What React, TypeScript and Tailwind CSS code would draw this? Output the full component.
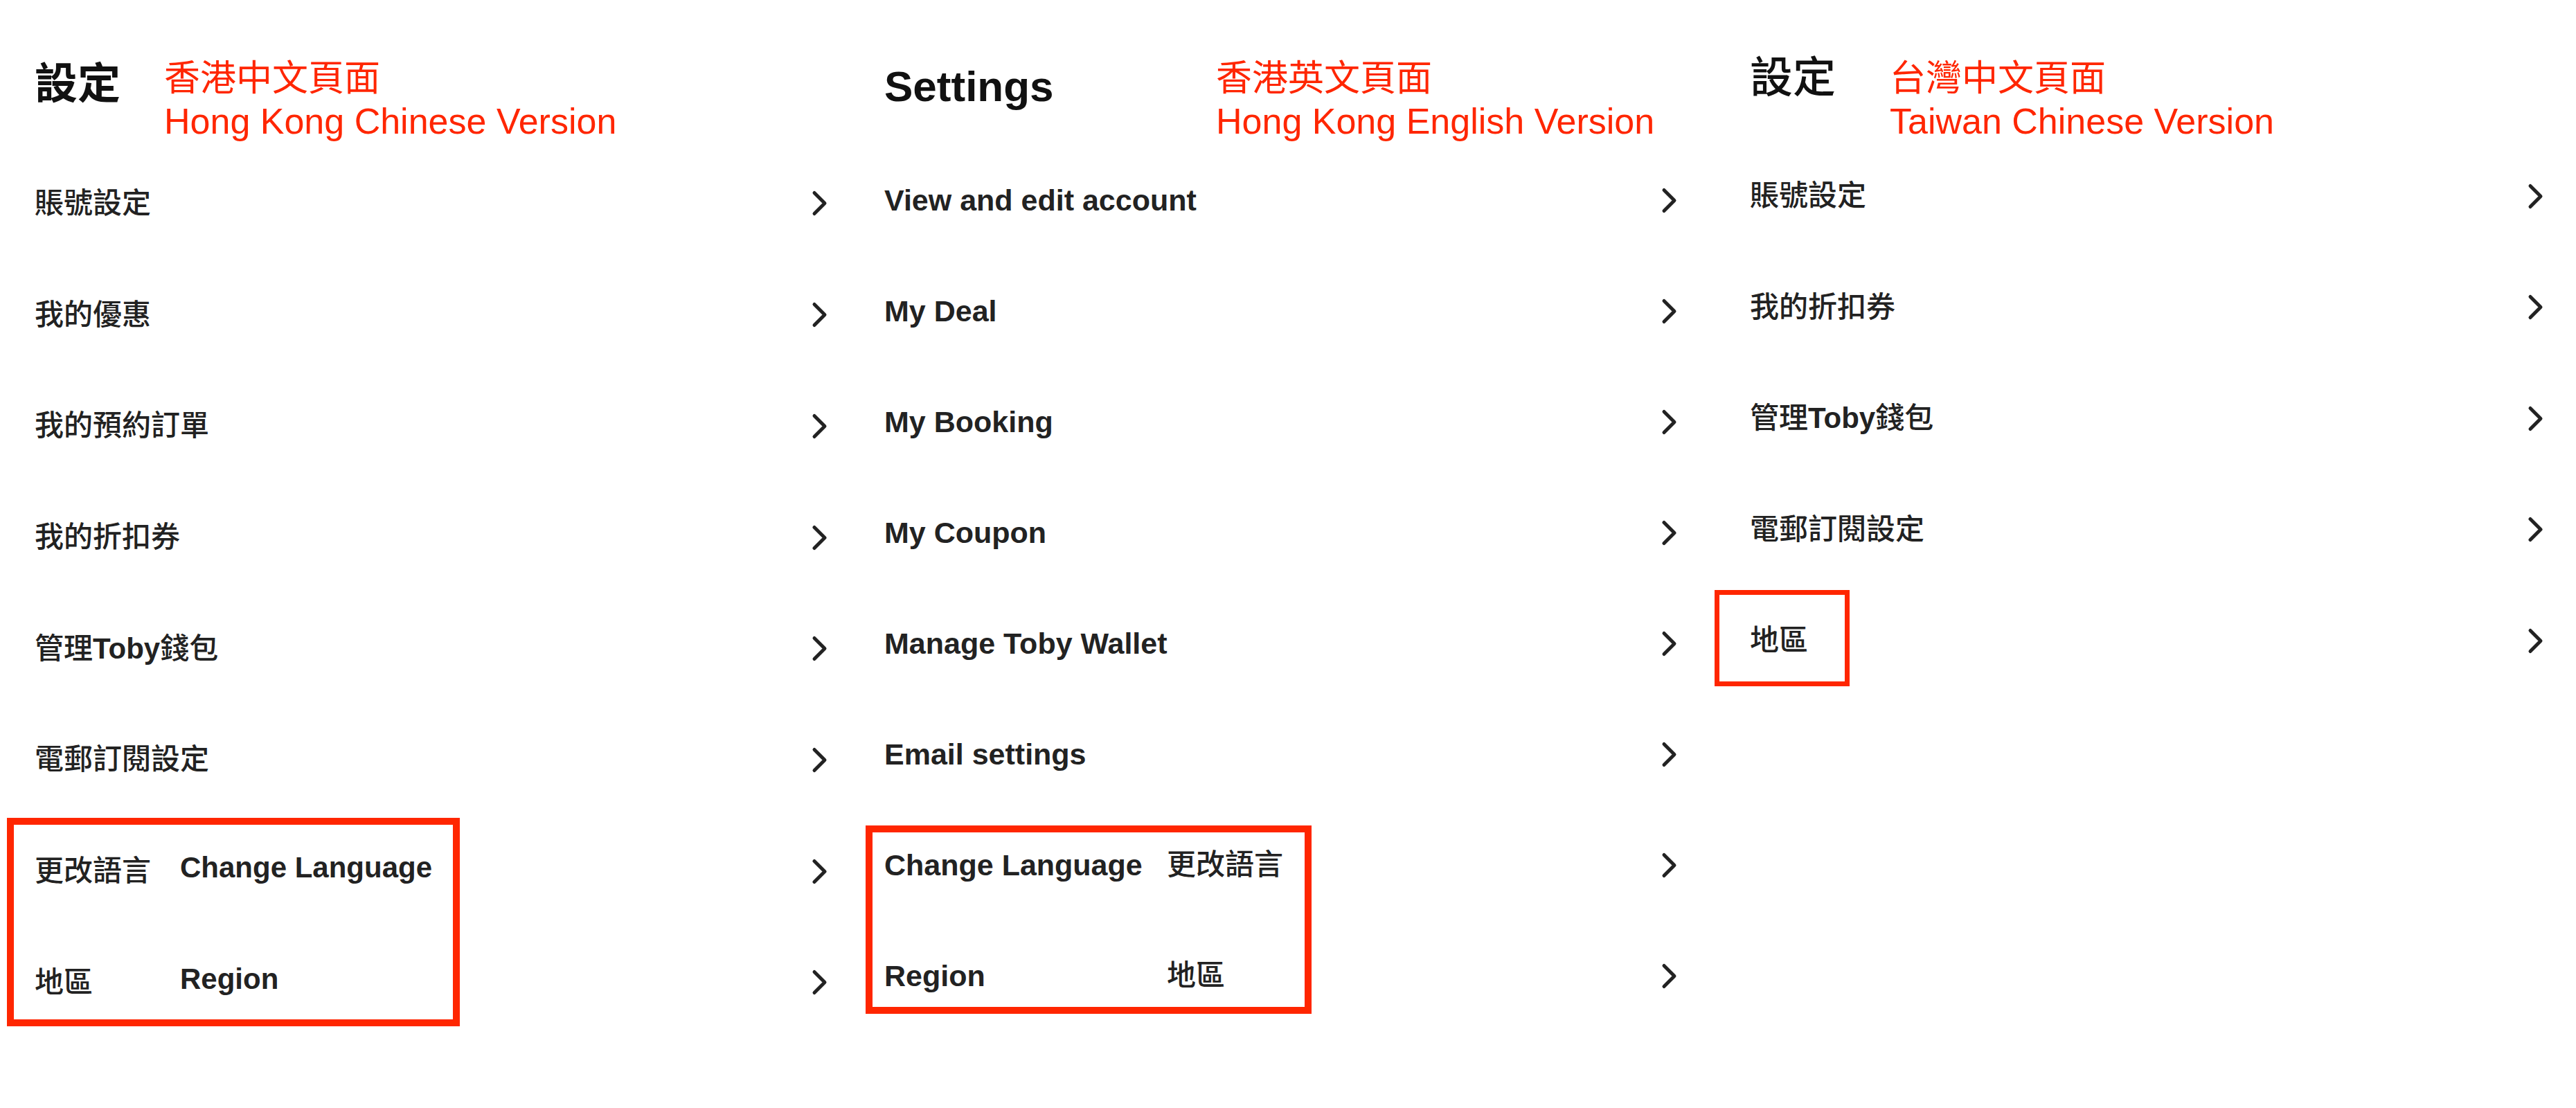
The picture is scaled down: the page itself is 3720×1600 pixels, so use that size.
import { ReactNode } from "react";

const FONT = "font-['Liberation_Sans','Noto_Sans_CJK_TC',sans-serif]";

const Chevron = () => (
  <svg
    width="25"
    height="39"
    viewBox="0 0 25 39"
    fill="none"
    className="shrink-0"
  >
    <path
      d="M5 4.5 L20 19.5 L5 34.5"
      stroke="#222"
      strokeWidth="5"
      strokeLinecap="round"
      strokeLinejoin="round"
    />
  </svg>
);

// latin words inside chinese labels are set bold, the rest medium
const Label = ({ text }: { text: string }) => (
  <>
    {text.split(/([A-Za-z ]+)/).map((part, i) =>
      /[A-Za-z]/.test(part) ? (
        <span key={i} className="font-bold">
          {part}
        </span>
      ) : (
        <span key={i}>{part}</span>
      )
    )}
  </>
);

const Row = ({ height, children }: { height: string; children: ReactNode }) => (
  <div className={`flex items-center justify-between ${height}`}>
    <div className="flex items-center text-[42px] leading-[50px] font-medium text-[#222] whitespace-pre">
      {children}
    </div>
    <Chevron />
  </div>
);

const Note = ({ zh, en }: { zh: string; en: string }) => (
  <div className="text-[52px] leading-[62px] text-[#ff2600] whitespace-nowrap">
    <div>{zh}</div>
    <div>{en}</div>
  </div>
);

const hkRows = [
  "賬號設定",
  "我的優惠",
  "我的預約訂單",
  "我的折扣券",
  "管理Toby錢包",
  "電郵訂閱設定",
];

const enRows = [
  "View and edit account",
  "My Deal",
  "My Booking",
  "My Coupon",
  "Manage Toby Wallet",
  "Email settings",
];

const twRows = ["賬號設定", "我的折扣券", "管理Toby錢包", "電郵訂閱設定", "地區"];

const App = () => {
  return (
    <div className={`w-[3720px] h-[1600px] bg-white flex ${FONT}`}>
      {/* 香港中文 */}
      <div className="relative w-[1227px] pl-[50px] pr-[31px]">
        <div className="flex items-start h-[213.6px] pt-[82px]">
          <div className="w-[187px] mt-[9px] text-[62px] leading-[62px] font-bold text-[#111]">
            設定
          </div>
          <Note zh="香港中文頁面" en="Hong Kong Chinese Version" />
        </div>
        {hkRows.map((label) => (
          <Row key={label} height="h-[160.7px]">
            <Label text={label} />
          </Row>
        ))}
        <Row height="h-[160.7px]">
          <span className="w-[210px]">更改語言</span>
          <span className="font-bold mb-[10px]">Change Language</span>
        </Row>
        <Row height="h-[160.7px]">
          <span className="w-[210px]">地區</span>
          <span className="font-bold mb-[10px]">Region</span>
        </Row>
        <div className="absolute left-[10px] top-[1181px] w-[654px] h-[301px] border-[10px] border-[#ff2600]" />
      </div>

      {/* 香港英文 */}
      <div className="relative w-[1227px] pl-[50px] pr-[31px]">
        <div className="flex items-start h-[209px] pt-[82px]">
          <div className="w-[479px] mt-[12px] text-[62px] leading-[62px] font-bold text-[#111]">
            Settings
          </div>
          <Note zh="香港英文頁面" en="Hong Kong English Version" />
        </div>
        {enRows.map((label) => (
          <Row key={label} height="h-[160px]">
            <span className="font-bold text-[43px]">{label}</span>
          </Row>
        ))}
        <Row height="h-[160px]">
          <span className="w-[408px] font-bold text-[43px]">Change Language</span>
          <span>更改語言</span>
        </Row>
        <Row height="h-[160px]">
          <span className="w-[408px] font-bold text-[43px]">Region</span>
          <span>地區</span>
        </Row>
        <div className="absolute left-[23px] top-[1192px] w-[644px] h-[272px] border-[10px] border-[#ff2600]" />
      </div>

      {/* 台灣中文 */}
      <div className="relative flex-1 pl-[73px] pr-[46px]">
        <div className="flex items-start h-[203px] pt-[82px]">
          <div className="w-[202px] mt-0 text-[62px] leading-[62px] font-medium text-[#111]">
            設定
          </div>
          <Note zh="台灣中文頁面" en="Taiwan Chinese Version" />
        </div>
        {twRows.map((label) => (
          <Row key={label} height="h-[160.5px]">
            <Label text={label} />
          </Row>
        ))}
        <div className="absolute left-[22px] top-[852px] w-[195px] h-[139px] border-[7px] border-[#ff2600]" />
      </div>
    </div>
  );
};

export default App;
